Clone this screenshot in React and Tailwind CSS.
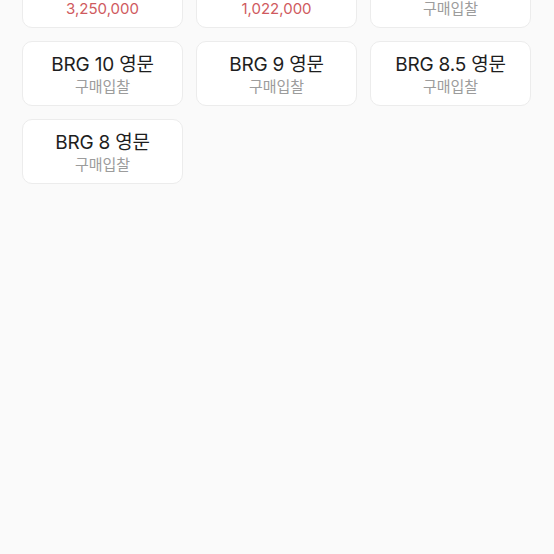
import React from 'react';

const cards = [
  { name: 'BRG 11.5 영문', sub: '3,250,000', price: true },
  { name: 'BRG 11 영문', sub: '1,022,000', price: true },
  { name: 'BRG 10.5 영문', sub: '구매입찰' },
  { name: 'BRG 10 영문', sub: '구매입찰' },
  { name: 'BRG 9 영문', sub: '구매입찰' },
  { name: 'BRG 8.5 영문', sub: '구매입찰' },
  { name: 'BRG 8 영문', sub: '구매입찰' },
];

export default function App() {
  return (
    <div
      className="w-[554px] h-[554px] overflow-hidden bg-[#fafafa]"
      style={{ fontFamily: 'Inter, "Noto Sans CJK KR", sans-serif' }}
    >
      <div className="grid grid-cols-3 gap-x-[13px] gap-y-[13px] pl-[22px] pr-[23px] -mt-[37px]">
        {cards.map((c) => (
          <div
            key={c.name}
            className="h-[65px] pt-[2px] rounded-[10px] border border-[#ececec] bg-white flex flex-col items-center justify-center"
          >
            <div className="text-[19px] leading-[23px] text-[#1e1e1e] tracking-[-0.2px]">{c.name}</div>
            <div
              className={
                c.price
                  ? 'text-[15px] leading-[20px] mt-[1px] text-[#cf5a5e]'
                  : 'text-[15px] leading-[20px] mt-[1px] text-[#9c9c9c]'
              }
            >
              {c.sub}
            </div>
          </div>
        ))}
      </div>
    </div>
  );
}
